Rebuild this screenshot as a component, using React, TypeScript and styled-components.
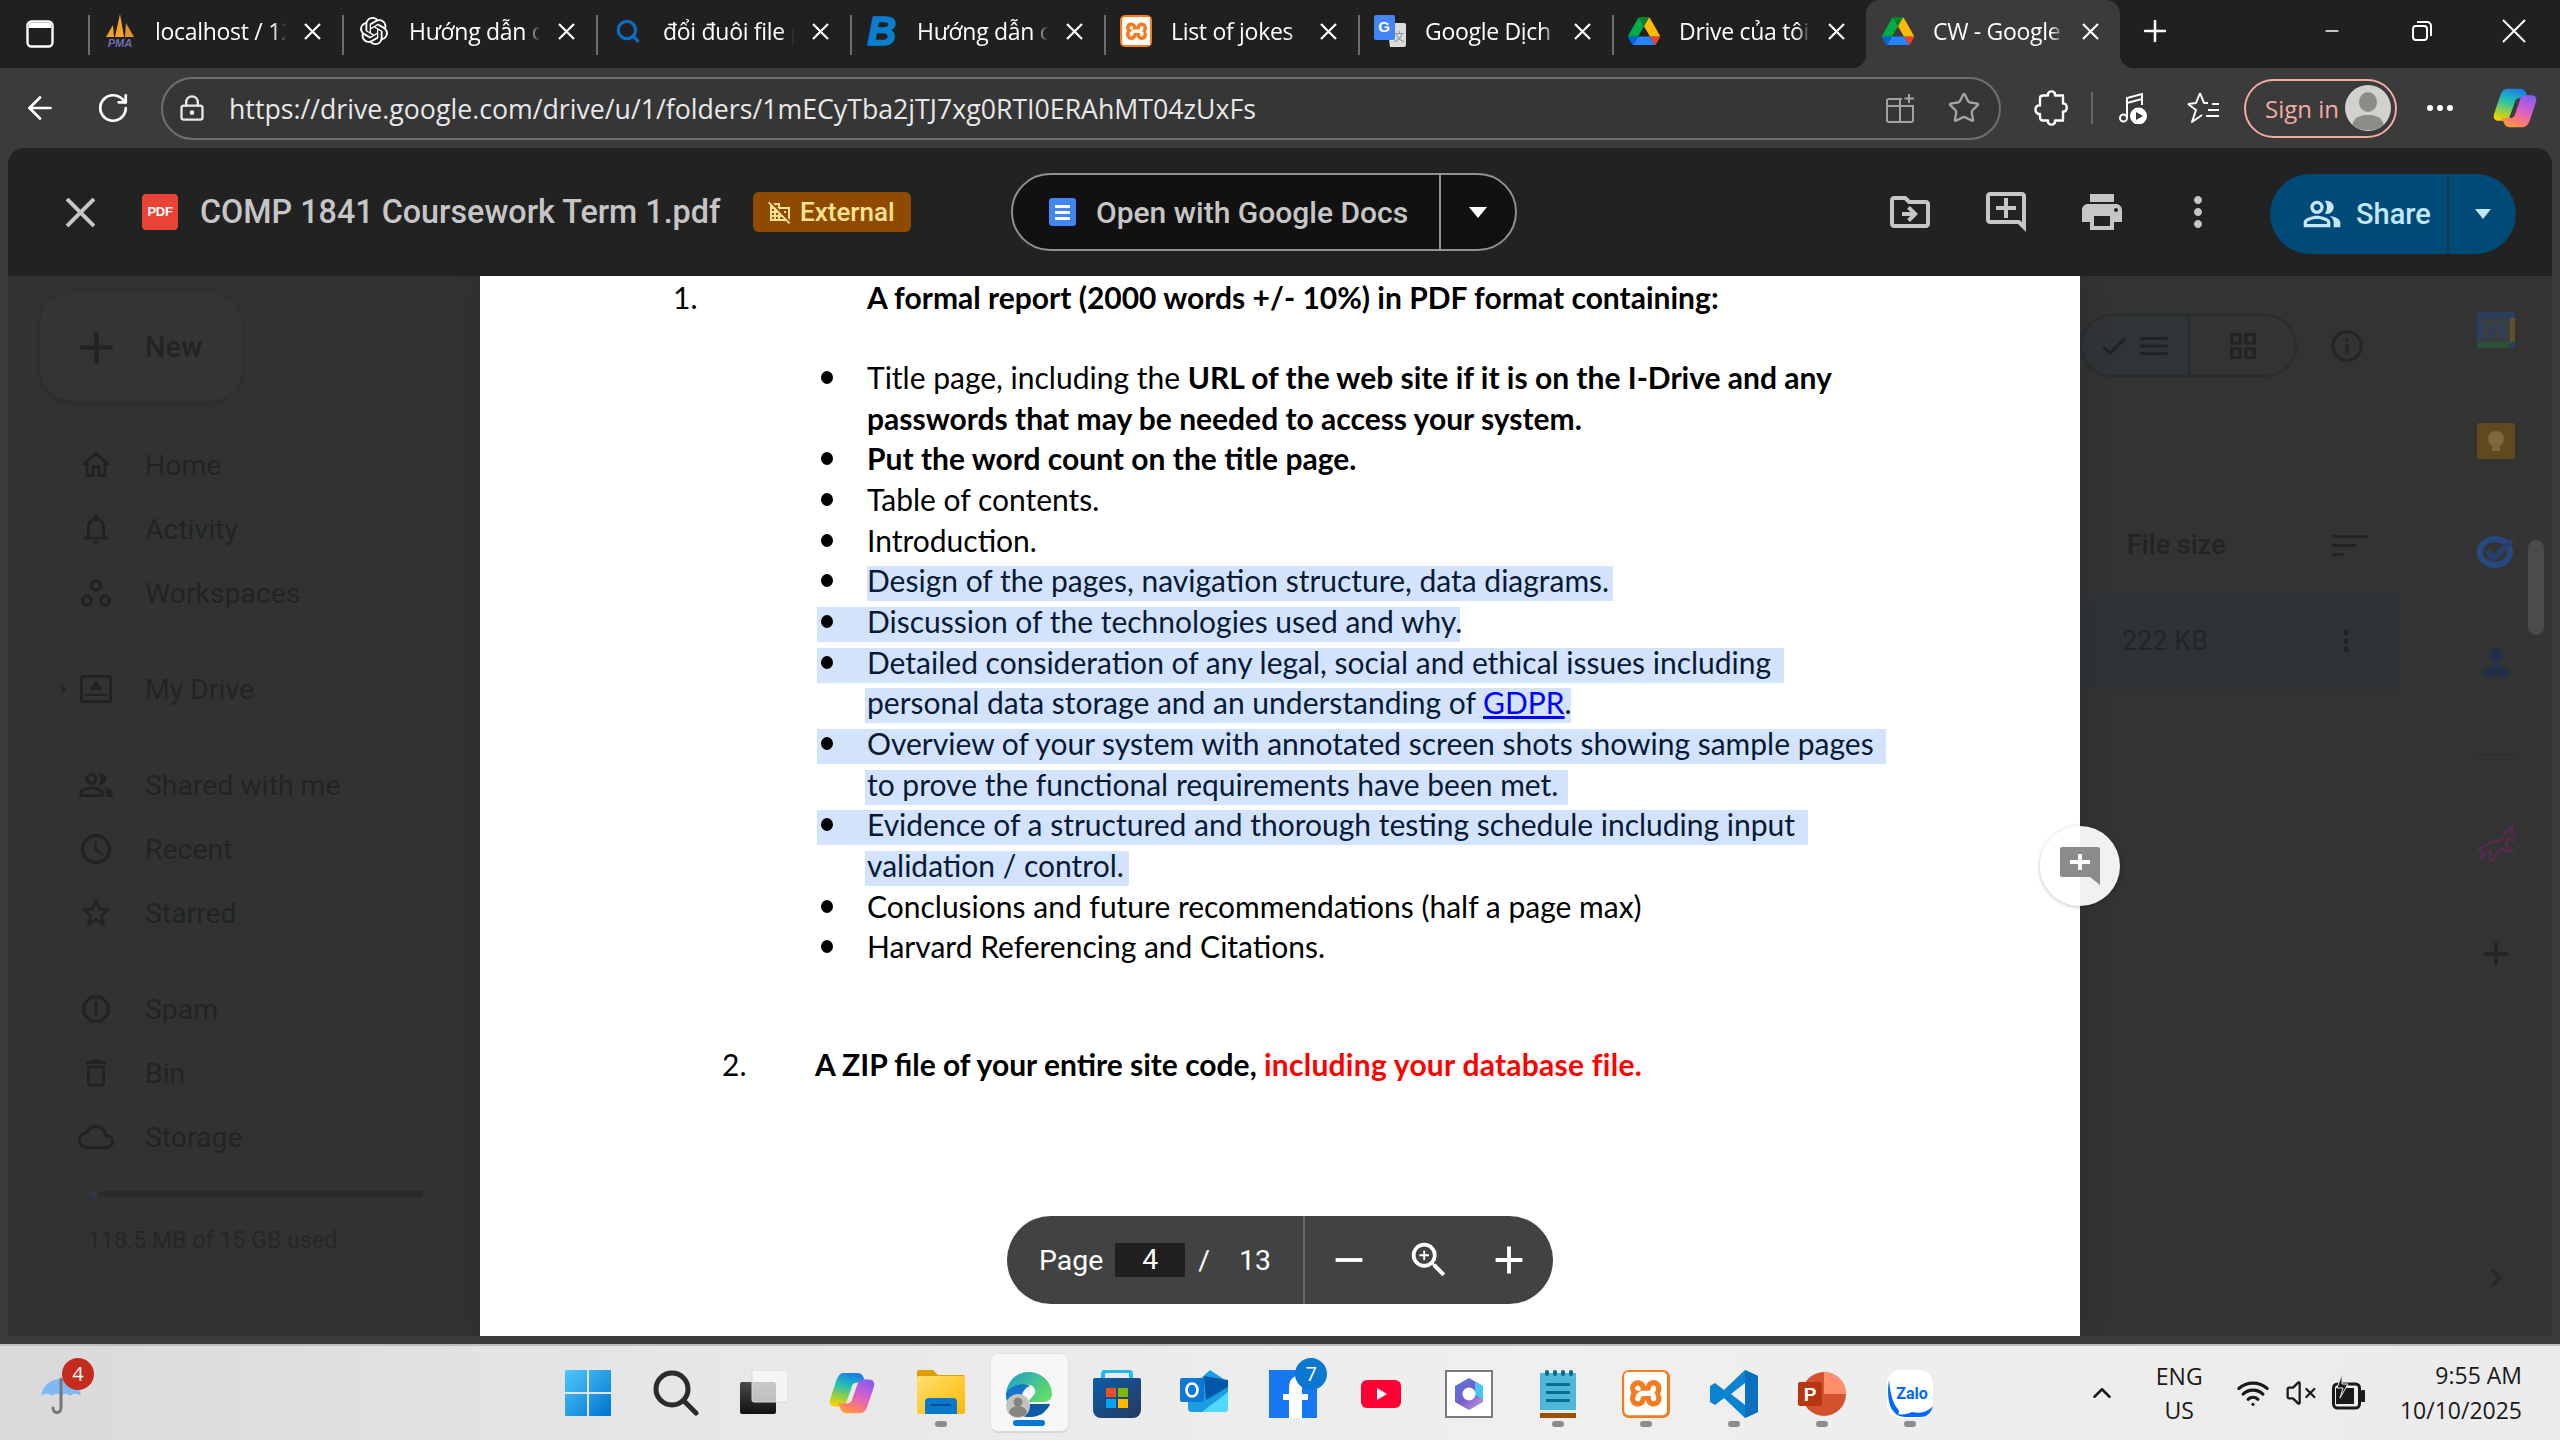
import React from "react";
import styled, { createGlobalStyle } from "styled-components";
import {
  MdOutlineDriveFileMove, MdOutlineAddComment, MdPrint, MdMoreVert, MdZoomIn, MdCheck, MdMenu,
  MdOutlineGridView, MdInfoOutline, MdOutlineHome, MdOutlineNotifications, MdOutlineWorkspaces, MdOutlinePeopleAlt,
  MdOutlineAccessTime, MdStarOutline, MdOutlineReport, MdOutlineDelete, MdOutlineCloud, MdAdd, MdRemove,
  MdDomainDisabled, MdOutlineChevronRight,
} from "react-icons/md";
import { SiOpenai, SiXampp } from "react-icons/si";
import { ArrowLeft, RotateCw, Search, Star, Plus, Minus, LockKeyhole, ChevronUp, VolumeX, Wifi } from "lucide-react";

const Global = createGlobalStyle`
  html, body { margin: 0; padding: 0; background: #3b3b3b; }
  * { box-sizing: border-box; }
`;

const Screen = styled.div`
  width: 2560px; height: 1440px; overflow: hidden; display: flex; flex-direction: column;
  background: #3b3b3b; font-family: "Open Sans", sans-serif;
`;

/* ---------- tab strip ---------- */
const TabStrip = styled.div`
  height: 68px; background: #202020; display: flex; align-items: stretch; color: #fff; flex: none;
`;
const PaneToggle = styled.div`
  width: 88px; display: flex; align-items: center; justify-content: flex-start; padding-left: 26px;
`;
const Tab = styled.div<{ $active?: boolean; $sep?: boolean }>`
  width: 254px; position: relative; display: flex; align-items: center; padding: 0 21px 6px 14px;
  background: ${(p) => (p.$active ? "#3b3b3b" : "transparent")};
  border-radius: ${(p) => (p.$active ? "14px 14px 0 0" : "0")};
  &::before {
    content: ""; position: absolute; left: 0; top: 15px; height: 40px; width: 2px;
    background: ${(p) => (p.$sep ? "#6c6c6c" : "transparent")};
  }
  ${(p) => p.$active && `
    &::after {
      content: ""; position: absolute; left: -14px; right: -14px; bottom: 0; height: 14px; pointer-events: none;
      background:
        radial-gradient(circle at 0 0, transparent 14px, #3b3b3b 14.5px) left bottom / 14px 14px no-repeat,
        radial-gradient(circle at 100% 0, transparent 14px, #3b3b3b 14.5px) right bottom / 14px 14px no-repeat;
    }`}
`;
const Favicon = styled.div`
  width: 36px; height: 40px; flex: none; display: flex; align-items: center; justify-content: center;
`;
const TabTitle = styled.div`
  margin-left: 17px; width: 131px; flex: none; overflow: hidden; white-space: nowrap;
  font-size: 23px; line-height: 34px; letter-spacing: -0.3px; color: #fff;
  -webkit-mask-image: linear-gradient(90deg, #000 90%, transparent 100%);
  mask-image: linear-gradient(90deg, #000 90%, transparent 100%);
`;
const TabClose = styled.div`
  margin-left: auto; width: 17px; display: flex; justify-content: center; color: #fff; flex: none;
`;
const NewTab = styled.div`
  width: 70px; display: flex; align-items: center; justify-content: center; padding: 0 0 6px 0;
`;
const WindowControls = styled.div`
  margin-left: auto; display: flex; align-items: center; padding-right: 34px; gap: 70px; padding-bottom: 6px;
`;
const BItalic = styled.span`
  font-family: "Liberation Sans", sans-serif; font-weight: 700; font-style: italic; font-size: 40px; line-height: 40px; color: #0a7fd0;
  -webkit-text-stroke: 1.6px #0a7fd0;
`;
const XamppBox = styled.div<{ $size: number }>`
  width: ${(p) => p.$size}px; height: ${(p) => p.$size}px; background: #f47b20; border-radius: ${(p) => Math.round(p.$size / 7)}px;
  display: flex; align-items: center; justify-content: center; flex: none;
`;

/* ---------- toolbar ---------- */
const Toolbar = styled.div`
  height: 80px; flex: none; display: flex; align-items: center; color: #fff;
`;
const NavIcons = styled.div`
  width: 161px; display: flex; align-items: center; padding-left: 22px; gap: 38px; flex: none;
`;
const AddressField = styled.div`
  width: 1840px; height: 63px; flex: none; display: flex; align-items: center; padding: 0 18px 0 15px;
  border: 2px solid #6f6f6f; border-radius: 32px; background: #363636;
`;
const Url = styled.div`
  margin-left: 23px; font-size: 26.7px; color: #e8e8e8; white-space: nowrap; width: 1100px;
`;
const FieldIcons = styled.div`
  margin-left: auto; display: flex; align-items: center; gap: 31px; color: #a3a3a3;
`;
const ToolIcons = styled.div`
  display: flex; align-items: center; flex: 1; padding-left: 33px;
`;
const Sep = styled.div`
  width: 2px; height: 32px; background: #666; margin: 0 26px 0 23px;
`;
const FavSlot = styled.div`
  margin-left: 39px; display: flex;
`;
const SignIn = styled.div`
  width: 153px; height: 59px; margin-left: 24px; border: 2px solid #f2aca4; border-radius: 30px; display: flex;
  align-items: center; padding-left: 19px; color: #f2aca4; font-size: 24px; justify-content: space-between; padding-right: 4px;
`;
const Avatar = styled.div`
  width: 46px; height: 46px; border-radius: 50%; background: #d2d1cd; overflow: hidden; display: flex; align-items: center; justify-content: center;
`;
const MoreDots = styled.div`
  margin-left: 30px; display: flex; gap: 4px;
  span { width: 6px; height: 6px; border-radius: 50%; background: #fff; display: block; }
`;
const CopilotSlot = styled.div`
  margin-left: 40px; display: flex;
`;

/* ---------- viewer window ---------- */
const Viewer = styled.div`
  margin: 0 8px; height: 1188px; flex: none; border-radius: 16px 16px 0 0; overflow: hidden; display: flex; flex-direction: column;
`;
const Header = styled.div`
  height: 128px; flex: none; background: #222222; display: flex; align-items: center; padding-left: 56px;
  font-family: Roboto, sans-serif; color: #c4c7c5;
`;
const HeaderClose = styled.div`
  width: 32px; display: flex; justify-content: center; color: #c4c7c5; flex: none;
`;
const PdfIcon = styled.div`
  margin-left: 46px; width: 36px; height: 36px; border-radius: 4px; background: #ea4335; color: #fff; flex: none;
  font: 900 13px/36px "Liberation Sans", sans-serif; text-align: center; letter-spacing: -0.3px;
`;
const DocTitle = styled.div`
  margin-left: 22px; width: 553px; flex: none; white-space: nowrap; font-size: 32.3px; font-weight: 500; color: #c6c6c6;
`;
const ExternalBadge = styled.div`
  width: 158px; height: 40px; flex: none; background: #8f4a00; border-radius: 6px; display: flex; align-items: center; gap: 8px;
  padding-left: 15px; color: #fde293; font-size: 26px; font-weight: 500; margin-right: 100px;
`;
const OpenWith = styled.div`
  width: 506px; height: 78px; flex: none; border: 2px solid #8e918f; border-radius: 39px; background: #111111;
  display: flex; align-items: center; margin-right: 369px;
`;
const OpenMain = styled.div`
  width: 428px; height: 100%; flex: none; display: flex; align-items: center; padding-left: 36px; gap: 20px;
  font-size: 30px; font-weight: 500; color: #c6c6c6; border-right: 2px solid #8e918f; white-space: nowrap;
`;
const DocsGlyph = styled.div`
  width: 27px; height: 28px; border-radius: 3px; background: #4285f4; display: flex; flex-direction: column; align-items: center;
  justify-content: center; gap: 3px; flex: none;
  span { width: 15px; height: 3px; background: #fff; display: block; }
`;
const OpenCaret = styled.div`
  flex: 1; display: flex; justify-content: center;
`;
const Triangle = styled.div<{ $c: string; $s: number }>`
  width: 0; height: 0; border-left: ${(p) => p.$s}px solid transparent; border-right: ${(p) => p.$s}px solid transparent;
  border-top: ${(p) => p.$s + 2}px solid ${(p) => p.$c};
`;
const HeaderIcons = styled.div`
  display: flex; gap: 48px; margin-right: 48px; color: #c4c7c5;
`;
const HeaderIcon = styled.div`
  width: 48px; height: 48px; display: flex; align-items: center; justify-content: center;
`;
const ShareBtn = styled.div`
  width: 246px; height: 80px; margin-top: 4px; border-radius: 40px; background: #004a77; color: #c2e7ff; display: flex; align-items: center; flex: none;
`;
const ShareMain = styled.div`
  width: 179px; height: 100%; display: flex; align-items: center; padding-left: 32px; gap: 14px; font-size: 29px; font-weight: 500;
  border-right: 2px solid #1c3548;
`;
const ShareCaret = styled.div`
  flex: 1; display: flex; justify-content: center;
`;

const Body = styled.div`
  height: 1060px; display: grid; grid-template-columns: 472px 1600px 472px; grid-template-rows: 1060px; position: relative;
  font-family: Roboto, sans-serif;
`;

/* ---------- dimmed drive sidebar ---------- */
const Sidebar = styled.div`
  background: #313333; padding-top: 17px; color: #242626; display: flex; flex-direction: column;
`;
const NewButton = styled.div`
  width: 202px; height: 108px; margin-left: 32px; border-radius: 32px; background: #333535; box-shadow: 0 2px 6px rgba(0,0,0,.14);
  display: flex; align-items: center; padding-left: 29px; gap: 21px; font-size: 29px; font-weight: 500; color: #222424; margin-bottom: 32px; flex: none;
`;
const NavGroup = styled.div<{ $last?: boolean }>`
  margin-bottom: ${(p) => (p.$last ? 0 : 32)}px;
`;
const NavRow = styled.div`
  height: 64px; display: flex; align-items: center; padding-left: 48px; font-size: 28.4px; color: #222424;
`;
const CaretCell = styled.div`
  width: 22px; height: 36px; display: flex; align-items: center; flex: none;
`;
const SmallCaret = styled.div`
  width: 0; height: 0; border-top: 5px solid transparent; border-bottom: 5px solid transparent; border-left: 6px solid #242626; margin-left: 5px;
`;
const NavIcon = styled.div`
  width: 36px; display: flex; justify-content: center; margin-right: 31px; color: #212323; flex: none;
`;
const StorageBar = styled.div`
  margin: 22px 0 0 84px; width: 331px; height: 6px; background: #292b2b; display: flex; flex: none;
  &::before { content: ""; width: 3px; height: 100%; background: #2a3a50; }
  &::after { content: ""; width: 4px; height: 100%; background: #313333; }
`;
const StorageText = styled.div`
  margin: 26px 0 0 80px; font-size: 23.2px; line-height: 34px; color: #252727; white-space: nowrap;
`;

/* ---------- pdf page ---------- */
const Page = styled.div`
  background: #fff; position: relative; padding-top: 4px; color: #000; box-shadow: 0 0 26px rgba(0,0,0,.12); z-index: 1;
  font-family: Lato, sans-serif; font-size: 30px;
`;
const HeadRow = styled.div<{ $indent: number; $num: number; $gap?: number }>`
  display: flex; align-items: center; height: 40.7px; padding-left: ${(p) => p.$indent}px; margin-top: ${(p) => p.$gap ?? 0}px; white-space: nowrap;
  & > span:first-child { width: ${(p) => p.$num}px; flex: none; }
`;
const ItemList = styled.div`
  margin-top: 39.3px; padding-left: 337px;
`;
const ItemRow = styled.div`
  display: flex; align-items: center; height: 40.7px; white-space: nowrap;
`;
const Band = styled.div<{ $w?: number; $left?: number; $pad?: number; $on?: boolean }>`
  display: flex; align-items: center; height: 35px; flex: none;
  width: ${(p) => (p.$w ? `${p.$w}px` : "auto")};
  margin-left: ${(p) => p.$left ?? 0}px; padding-left: ${(p) => p.$pad ?? 0}px;
  background: ${(p) => (p.$on ? "#d3e3fd" : "transparent")};
  color: ${(p) => (p.$on ? "#061a35" : "#000")};
`;
const LineText = styled.span`
  display: block; padding-bottom: 6px; line-height: 35px;
`;
const BulletCell = styled.div`
  width: 50px; flex: none; display: flex; padding: 0 0 6px 4px;
  &::before { content: ""; width: 12px; height: 13px; border-radius: 50%; background: #000; display: block; }
`;
const Strong = styled.b`font-weight: 700;`;
const RedStrong = styled.b`font-weight: 700; color: #ff0000; letter-spacing: 0.25px;`;
const DocLink = styled.span`color: #0000ff; text-decoration: underline;`;
const CommentFab = styled.div`
  position: absolute; left: 2032px; top: 550px; width: 80px; height: 80px; border-radius: 50%; z-index: 2; display: flex; align-items: center; justify-content: center;
  background: linear-gradient(90deg, #fff 50%, #f1f1f1 50%); box-shadow: 0 1px 4px rgba(0,0,0,.25);
`;
const PageBar = styled.div`
  position: absolute; left: 527px; bottom: 32px; width: 546px; height: 88px; border-radius: 44px; background: #424242; color: #fff;
  display: flex; align-items: center; font-family: Roboto, sans-serif; font-size: 28.4px;
`;
const PagePart = styled.div`
  width: 298px; height: 100%; display: flex; align-items: center; padding-left: 32px; border-right: 2px solid #6b6b6b; flex: none;
`;
const PageInput = styled.div`
  width: 70px; height: 34px; background: #202020; margin: 0 13px 0 12px; text-align: center; line-height: 34px;
`;
const PageSlash = styled.span`margin-right: 29px;`;
const ZoomPart = styled.div`
  flex: 1; display: flex; align-items: center; justify-content: space-between; padding: 0 21px 0 21px;
`;

/* ---------- dimmed drive right panel ---------- */
const RightPanel = styled.div`
  background: #333333; display: grid; grid-template-columns: 320px 1fr; position: relative; color: #252525;
`;
const FileArea = styled.div`
  padding-top: 38px; display: flex; flex-direction: column;
`;
const ViewBar = styled.div`
  display: flex; align-items: center; gap: 31px;
`;
const ViewToggle = styled.div`
  width: 217px; height: 63px; border: 2px solid #2b2d2d; border-radius: 32px; display: flex; overflow: hidden; flex: none;
`;
const ViewHalf = styled.div<{ $on?: boolean }>`
  width: ${(p) => (p.$on ? "108px" : "105px")}; display: flex; align-items: center; justify-content: center; gap: 6px; color: #202224;
  background: ${(p) => (p.$on ? "#2f3437" : "transparent")}; border-right: ${(p) => (p.$on ? "2px solid #2b2d2d" : "0")};
`;
const SizeHeader = styled.div`
  margin-top: 144px; height: 48px; display: flex; align-items: center; padding-left: 47px; font-size: 27px; font-weight: 500; color: #232323;
`;
const SortLines = styled.div`
  margin-left: 107px; display: flex; flex-direction: column; gap: 6px;
  span { height: 3px; background: #242424; display: block; }
  span:nth-child(1) { width: 36px; } span:nth-child(2) { width: 24px; } span:nth-child(3) { width: 12px; }
`;
const SelectedRow = styled.div`
  margin-top: 24px; height: 96px; background: #2e3336; display: flex; align-items: center; padding-left: 42px; font-size: 27px; color: #222528;
`;
const RowDots = styled.div`
  margin-left: auto; margin-right: 36px; width: 36px; display: flex; justify-content: center; color: #202224;
`;
const Rail = styled.div`
  margin-left: 40px; display: flex; flex-direction: column; align-items: center; width: 112px; padding-top: 34px;
`;
const RailIcon = styled.div<{ $after?: number }>`
  width: 40px; height: 40px; display: flex; align-items: center; justify-content: center; margin-bottom: ${(p) => p.$after ?? 71}px; flex: none;
`;
const RailRule = styled.div`
  width: 38px; height: 2px; background: #2f2f2f; margin-bottom: 67px; flex: none;
`;
const Scrollbar = styled.div`
  position: absolute; right: 8px; top: 264px; width: 16px; height: 95px; border-radius: 8px; background: #4b4b4b;
`;

/* ---------- taskbar ---------- */
const Gutter = styled.div`height: 8px; flex: none;`;
const Taskbar = styled.div`
  height: 96px; flex: none; border-top: 2px solid #bdbdbd; background: linear-gradient(90deg, #d9d9d9 0%, #e8e8e8 30%, #efefef 60%, #ebebeb 100%);
  display: flex; align-items: stretch; color: #1a1a1a;
`;
const WeatherZone = styled.div`
  width: 544px; flex: none; position: relative; padding: 30px 0 0 40px;
`;
const CountBadge = styled.div<{ $bg: string; $left: number; $top: number }>`
  position: absolute; z-index: 2; left: ${(p) => p.$left}px; top: ${(p) => p.$top}px; width: 32px; height: 32px; border-radius: 50%; background: ${(p) => p.$bg};
  color: #fff; font: 20px/32px "Open Sans", sans-serif; text-align: center;
`;
const Slot = styled.div<{ $active?: boolean }>`
  width: 88.15px; flex: none; position: relative; display: flex; align-items: flex-start; justify-content: center; padding-top: 24px;
  ${(p) => p.$active && `
    &::before {
      content: ""; position: absolute; left: 5px; top: 7px; width: 77px; height: 77px; background: #f7f7f7; border: 1px solid #e2e2e2; border-bottom: 2px solid #d8d8d8; border-radius: 8px;
    }`}
  & > svg { position: relative; }
`;
const RunDot = styled.div<{ $active?: boolean }>`
  position: absolute; left: 50%; bottom: ${(p) => (p.$active ? "14px" : "13px")}; transform: translateX(-50%);
  width: ${(p) => (p.$active ? "32px" : "12px")}; height: 6px; border-radius: 3px; background: ${(p) => (p.$active ? "#0078d4" : "#8b8b8b")};
`;
const Tray = styled.div`
  margin-left: 133px; display: flex; align-items: center; flex: 1;
`;
const Lang = styled.div`
  width: 70px; margin-left: 27px; text-align: center; font-size: 23px; line-height: 34px; flex: none;
`;
const TrayIcons = styled.div`
  display: flex; align-items: center; gap: 15px; margin-left: 22px; flex: none;
`;
const Clock = styled.div`
  margin-left: auto; margin-right: 38px; text-align: right; font-size: 23px; line-height: 35px;
`;
const YoutubeSvg = styled.svg`
  margin-top: 10px;
`;

/* ---------- drawings ---------- */
const TightX = ({ size, weight, color = "currentColor" }: { size: number; weight: number; color?: string }) => (
  <svg width={size} height={size} viewBox={`0 0 ${size} ${size}`} fill="none" stroke={color} strokeWidth={weight}>
    <path d={`M1 1L${size - 1} ${size - 1}M${size - 1} 1L1 ${size - 1}`} />
  </svg>
);

const DriveLogo = ({ size = 32 }: { size?: number }) => (
  <svg width={size} height={size * 0.9} viewBox="0 0 87.3 78">
    <path d="m6.6 66.85 3.85 6.65c.8 1.4 1.95 2.5 3.3 3.3l13.75-23.8h-27.5c0 1.55.4 3.1 1.2 4.5z" fill="#0066da" />
    <path d="m43.65 25-13.75-23.8c-1.35.8-2.5 1.9-3.3 3.3l-25.4 44a9.06 9.06 0 0 0 -1.2 4.5h27.5z" fill="#00ac47" />
    <path d="m73.55 76.8c1.35-.8 2.5-1.9 3.3-3.3l1.6-2.75 7.65-13.25c.8-1.4 1.2-2.95 1.2-4.5h-27.502l5.852 11.5z" fill="#ea4335" />
    <path d="m43.65 25 13.75-23.8c-1.35-.8-2.9-1.2-4.5-1.2h-18.5c-1.6 0-3.15.45-4.5 1.2z" fill="#00832d" />
    <path d="m59.8 53h-32.3l-13.75 23.8c1.35.8 2.9 1.2 4.5 1.2h50.8c1.6 0 3.15-.45 4.5-1.2z" fill="#2684fc" />
    <path d="m73.4 26.5-12.7-22c-.8-1.4-1.95-2.5-3.3-3.3l-13.75 23.8 16.15 28h27.45c0-1.55-.4-3.1-1.2-4.5z" fill="#ffba00" />
  </svg>
);

const PmaLogo = () => (
  <svg width="36" height="36" viewBox="0 0 36 36">
    <path d="M4 24 L11 12 L12 24Z" fill="#f0a030" />
    <path d="M13 24 L18 1 L22 24Z" fill="#f6a52a" />
    <path d="M23 24 L24 10 L32 24Z" fill="#e8922a" />
    <text x="18" y="34" textAnchor="middle" fontSize="11" fontStyle="italic" fontWeight="700" fontFamily="Liberation Sans" fill="#6a6fa8">PMA</text>
  </svg>
);

const TranslateLogo = () => (
  <svg width="32" height="32" viewBox="0 0 32 32">
    <path d="M13 8h17a2 2 0 0 1 2 2v20a2 2 0 0 1-2 2H16z" fill="#dcdcdc" />
    <rect x="0" y="0" width="21" height="25" rx="2" fill="#4285f4" />
    <text x="10" y="17" textAnchor="middle" fontSize="15" fontWeight="700" fontFamily="Liberation Sans" fill="#fff">G</text>
    <text x="25" y="26" textAnchor="middle" fontSize="11" fontFamily="Noto Sans CJK SC" fill="#7d8a9a">文</text>
  </svg>
);

const XamppTile = ({ size }: { size: number }) => (
  <XamppBox $size={size}>
    <SiXampp size={size * 0.9} color="#fff" />
  </XamppBox>
);

const PuzzleGlyph = () => (
  <svg width="34" height="38" viewBox="0 0 34 38" fill="none" stroke="#fff" strokeWidth="2.4" strokeLinejoin="round">
    <path d="M12 6.500H14C13 1 22 1 21 6.500H29V14.500C34 13.500 34 23.500 29 22.500V31.500H21C22 37 13 37 14 31.500H9C7 31.500 6 30 6 28V25C0 26 0 15 6 16.500V9.500C6 7.500 7 6.500 9 6.500Z" />
  </svg>
);

const CopilotGlyph = ({ size, id }: { size: number; id: string }) => (
  <svg width={size} height={size} viewBox="0 0 48 48">
    <defs>
      <linearGradient id={`${id}a`} x1="0.6" y1="0" x2="0.3" y2="1">
        <stop offset="0" stopColor="#1b7fe8" /><stop offset="0.4" stopColor="#24c0b0" /><stop offset="0.75" stopColor="#9ad040" /><stop offset="1" stopColor="#f7d000" />
      </linearGradient>
      <linearGradient id={`${id}b`} x1="0.7" y1="0" x2="0.3" y2="1">
        <stop offset="0" stopColor="#8a5cf0" /><stop offset="0.45" stopColor="#d860c8" /><stop offset="0.8" stopColor="#ff7a70" /><stop offset="1" stopColor="#ff9a3c" />
      </linearGradient>
    </defs>
    <path d="M16 3H30C34 3 36 6 38 13H30C25 13 24 16 23 20L18 34C17 37 15 38 12 38H6C2 38 0 35 1 31L8 10C10 5 12 3 16 3Z" fill={`url(#${id}a)`} />
    <path d="M32 45H18C14 45 12 42 10 35H18C23 35 24 32 25 28L30 14C31 11 33 10 36 10H42C46 10 48 13 47 17L40 38C38 43 36 45 32 45Z" fill={`url(#${id}b)`} />
  </svg>
);

const WinLogo = () => (
  <svg width="46" height="46" viewBox="0 0 46 46">
    <defs>
      <linearGradient id="wl" x1="0" y1="0" x2="1" y2="1"><stop offset="0" stopColor="#50c8fb" /><stop offset="1" stopColor="#0072d0" /></linearGradient>
    </defs>
    <path d="M1 0H22V22H0V1a1 1 0 0 1 1-1ZM24 0H45a1 1 0 0 1 1 1V22H24ZM0 24H22V46H1a1 1 0 0 1-1-1ZM24 24H46V45a1 1 0 0 1-1 1H24Z" fill="url(#wl)" />
  </svg>
);
const SearchGlyph = () => (
  <svg width="46" height="46" viewBox="0 0 46 46" fill="none" stroke="#2b2b2b">
    <circle cx="19" cy="19" r="16" strokeWidth="5" />
    <path d="M31 31L43 43" strokeWidth="5" strokeLinecap="round" />
  </svg>
);
const TaskViewGlyph = () => (
  <svg width="48" height="46" viewBox="0 0 48 46">
    <defs><linearGradient id="tv" x1="0" y1="0" x2="0" y2="1"><stop offset="0" stopColor="#4a4a4a" /><stop offset="1" stopColor="#111" /></linearGradient></defs>
    <rect x="0" y="12" width="36" height="32" rx="2" fill="url(#tv)" />
    <rect x="12" y="0" width="36" height="32" rx="2" fill="#fafafa" fillOpacity=".72" stroke="#d8d8d8" />
  </svg>
);
const FolderGlyph = () => (
  <svg width="48" height="44" viewBox="0 0 48 44">
    <defs><linearGradient id="fo" x1="0" y1="0" x2="1" y2="1"><stop offset="0" stopColor="#ffe070" /><stop offset="1" stopColor="#fbb800" /></linearGradient></defs>
    <path d="M0 2a2 2 0 0 1 2-2H16l5 5H46a2 2 0 0 1 2 2v6H0Z" fill="#dca000" />
    <rect x="0" y="6" width="48" height="38" rx="2" fill="url(#fo)" />
    <path d="M8 32a4 4 0 0 1 4-4H36a4 4 0 0 1 4 4V44H8Z" fill="#0a78cc" />
    <rect x="14" y="34" width="20" height="2" fill="#064f94" />
  </svg>
);
const EdgeGlyph = () => (
  <svg width="48" height="48" viewBox="0 0 48 48">
    <defs>
      <linearGradient id="ed" x1="0" y1="0" x2="1" y2="0.6"><stop offset="0" stopColor="#1a9ad6" /><stop offset="1" stopColor="#5fdc6a" /></linearGradient>
    </defs>
    <path d="M1 23C3 9 14 1 25 2C38 3 47 13 47 24C47 29 43 32 38 32H24C25 28 29 26 30 23C31 18 27 14 21 15C12 16 6 19 1 23Z" fill="url(#ed)" />
    <path d="M1 23C6 15 18 12 25 16C19 18 15 25 17 33C19 41 30 46 40 42C35 46 29 47 24 47C10 46 0 36 1 23Z" fill="#1277c9" />
    <path d="M24 34H45C43 41 33 47 24 47C19 47 16 45 14 42C18 42 22 39 24 34Z" fill="#0c59a4" />
    <circle cx="13" cy="36" r="12" fill="#c4c3c0" />
    <circle cx="13" cy="32" r="4.5" fill="#858481" />
    <path d="M4 43a9 7 0 0 1 18 0a12 12 0 0 1-18 0Z" fill="#858481" />
  </svg>
);
const StoreGlyph = () => (
  <svg width="48" height="50" viewBox="0 0 48 50">
    <defs><linearGradient id="st" x1="0" y1="0" x2="1" y2="1"><stop offset="0" stopColor="#0b5ea8" /><stop offset="1" stopColor="#27385f" /></linearGradient></defs>
    <path d="M10 10V4a3 3 0 0 1 3-3H35a3 3 0 0 1 3 3V10" fill="none" stroke="#22b8f0" strokeWidth="4" />
    <path d="M2 8H46a2 2 0 0 1 2 2V40a8 8 0 0 1-8 8H8a8 8 0 0 1-8-8V10a2 2 0 0 1 2-2Z" fill="url(#st)" />
    <rect x="13" y="18" width="10" height="9" fill="#f25022" /><rect x="25" y="18" width="10" height="9" fill="#7fba00" />
    <rect x="13" y="29" width="10" height="9" fill="#00a4ef" /><rect x="25" y="29" width="10" height="9" fill="#ffb900" />
  </svg>
);
const OutlookGlyph = () => (
  <svg width="50" height="44" viewBox="0 0 50 44">
    <path d="M8 20L30 0L48 12V38a4 4 0 0 1-4 4H12a4 4 0 0 1-4-4Z" fill="#1b9de2" />
    <path d="M22 42L48 22V38a4 4 0 0 1-4 4Z" fill="#50d9ff" />
    <path d="M24 6L48 10V17L26 30Z" fill="#0358a7" />
    <rect x="0" y="8" width="24" height="24" rx="2" fill="#0f78d4" />
    <ellipse cx="12" cy="20" rx="5.5" ry="6.5" fill="none" stroke="#fff" strokeWidth="2.6" />
  </svg>
);
const FacebookGlyph = () => (
  <svg width="48" height="48" viewBox="0 0 48 48">
    <rect width="48" height="48" fill="#1877f2" />
    <path d="M33 48V30H39V24H33V18C33 14 35 12 38 12V5H33C24 5 20 10 20 18V24H14V30H20V48Z" fill="#fff" />
  </svg>
);
const YoutubeGlyph = () => (
  <YoutubeSvg width="40" height="28" viewBox="0 0 40 28">
    <rect width="40" height="28" rx="6" fill="#ff0033" />
    <path d="M16 8L26 14L16 20Z" fill="#fff" />
  </YoutubeSvg>
);
const M365Glyph = () => (
  <svg width="48" height="48" viewBox="0 0 48 48">
    <defs>
      <linearGradient id="m3" x1="0" y1="0" x2="1" y2="1"><stop offset="0" stopColor="#4a7fe0" /><stop offset="0.5" stopColor="#7a5cc8" /><stop offset="1" stopColor="#c49ae8" /></linearGradient>
    </defs>
    <rect x="1" y="1" width="46" height="46" fill="#fff" stroke="#7a7a7a" strokeWidth="2" />
    <path d="M24 8L38 16V32L24 40L10 32V16Z" fill="url(#m3)" />
    <path d="M30 11.5L38 16V30L30 24Z" fill="#45c8f0" />
    <circle cx="24" cy="24" r="6.5" fill="#fff" />
  </svg>
);
const NotepadGlyph = () => (
  <svg width="36" height="48" viewBox="0 0 36 48">
    <rect x="0" y="3" width="36" height="38" fill="#4fb7dc" />
    <rect x="0" y="40" width="36" height="3" fill="#dfeaf0" />
    <rect x="0" y="43" width="36" height="5" fill="#a04e00" />
    {[5, 13, 21, 29].map((x) => <rect key={x} x={x} y="0" width="4" height="6" rx="2" fill="#086d93" />)}
    {[13, 21, 29].map((y) => <rect key={y} x="6" y={y} width="24" height="3" rx="1" fill="#086d93" />)}
  </svg>
);
const VsCodeGlyph = () => (
  <svg width="48" height="48" viewBox="0 0 48 48">
    <path d="M35 0L48 6V42L35 48L14 28L5 35L0 32V16L5 13L14 20ZM35 13L21 24L35 35Z" fill="#0a84d0" fillRule="evenodd" />
    <path d="M35 0L48 6V42L35 48Z" fill="#0a6fbd" />
  </svg>
);
const PptGlyph = () => (
  <svg width="48" height="48" viewBox="0 0 48 48">
    <circle cx="26" cy="24" r="22" fill="#d35230" />
    <path d="M26 2A22 22 0 0 1 48 24H26Z" fill="#ff8f6b" />
    <rect x="0" y="12" width="24" height="24" rx="2" fill="#b7350f" />
    <text x="12" y="31" textAnchor="middle" fontSize="19" fontWeight="700" fontFamily="Liberation Sans" fill="#fff">P</text>
  </svg>
);
const ZaloGlyph = () => (
  <svg width="48" height="48" viewBox="0 0 48 48">
    <rect x="1" y="0" width="46" height="48" rx="14" fill="#fff" />
    <path d="M3 10C1 22 2 36 8 42C12 47 18 47 24 47H34C40 47 45 44 47 36C42 42 34 44 26 42C22 44 16 45 12 44C14 42 13 40 11 38C6 32 4 20 3 10Z" fill="#0068ff" />
    <text x="26" y="29" textAnchor="middle" fontSize="16" fontWeight="700" fontFamily="Roboto" fill="#0068ff">Zalo</text>
  </svg>
);

const taskbarApps: { node: React.ReactNode; dot?: boolean; active?: boolean; badge?: string }[] = [
  { node: <WinLogo /> }, { node: <SearchGlyph /> }, { node: <TaskViewGlyph /> },
  { node: <CopilotGlyph size={46} id="tb" /> }, { node: <FolderGlyph />, dot: true },
  { node: <EdgeGlyph />, active: true }, { node: <StoreGlyph /> }, { node: <OutlookGlyph /> },
  { node: <FacebookGlyph />, badge: "7" }, { node: <YoutubeGlyph /> }, { node: <M365Glyph /> },
  { node: <NotepadGlyph />, dot: true }, { node: <XamppTile size={48} />, dot: true },
  { node: <VsCodeGlyph />, dot: true }, { node: <PptGlyph />, dot: true },
  { node: <ZaloGlyph />, dot: true },
];

const tabs: { title: string; icon: React.ReactNode }[] = [
  { title: "localhost / 127.0.0.1", icon: <PmaLogo /> },
  { title: "Hướng dẫn cách", icon: <SiOpenai size={28} color="#fff" /> },
  { title: "đổi đuôi file pdf", icon: <Search size={26} color="#0f6cbd" strokeWidth={3} /> },
  { title: "Hướng dẫn cách", icon: <BItalic>B</BItalic> },
  { title: "List of jokes", icon: <XamppTile size={32} /> },
  { title: "Google Dịch", icon: <TranslateLogo /> },
  { title: "Drive của tôi - Google", icon: <DriveLogo size={32} /> },
  { title: "CW - Google Drive", icon: <DriveLogo size={32} /> },
];

const MyDriveIcon = () => (
  <svg width="32" height="28" viewBox="0 0 32 28" fill="none">
    <rect x="1.5" y="1.5" width="29" height="25" rx="2" stroke="currentColor" strokeWidth="3" />
    <path d="M5 20H27" stroke="currentColor" strokeWidth="2" />
    <path d="M16 5L23 15H9Z" fill="currentColor" />
  </svg>
);

type Item = { kind: "plain" | "text" | "full" | "cont"; w?: number; body: React.ReactNode };
const items: Item[] = [
  { kind: "plain", body: <>Title page, including the <Strong>URL of the web site if it is on the I-Drive and any</Strong></> },
  { kind: "cont", body: <Strong>passwords that may be needed to access your system.</Strong> },
  { kind: "plain", body: <Strong>Put the word count on the title page.</Strong> },
  { kind: "plain", body: "Table of contents." },
  { kind: "plain", body: "Introduction." },
  { kind: "text", w: 746, body: "Design of the pages, navigation structure, data diagrams." },
  { kind: "full", w: 643, body: "Discussion of the technologies used and why." },
  { kind: "full", w: 967, body: "Detailed consideration of any legal, social and ethical issues including" },
  { kind: "cont", w: 706, body: <>personal data storage and an understanding of <DocLink>GDPR</DocLink>.</> },
  { kind: "full", w: 1069, body: "Overview of your system with annotated screen shots showing sample pages" },
  { kind: "cont", w: 703, body: "to prove the functional requirements have been met." },
  { kind: "full", w: 991, body: "Evidence of a structured and thorough testing schedule including input" },
  { kind: "cont", w: 264, body: "validation / control." },
  { kind: "plain", body: "Conclusions and future recommendations (half a page max)" },
  { kind: "plain", body: "Harvard Referencing and Citations." },
];

const renderItem = (it: Item, i: number) => {
  if (it.kind === "plain")
    return <ItemRow key={i}><BulletCell /><LineText>{it.body}</LineText></ItemRow>;
  if (it.kind === "text")
    return <ItemRow key={i}><BulletCell /><Band $on $w={it.w}><LineText>{it.body}</LineText></Band></ItemRow>;
  if (it.kind === "full")
    return <ItemRow key={i}><Band $on $w={it.w}><BulletCell /><LineText>{it.body}</LineText></Band></ItemRow>;
  return <ItemRow key={i}><Band $on={!!it.w} $w={it.w} $left={48} $pad={2}><LineText>{it.body}</LineText></Band></ItemRow>;
};

const navGroups: { label: string; icon: React.ReactNode; caret?: boolean }[][] = [
  [
    { label: "Home", icon: <MdOutlineHome size={38} /> },
    { label: "Activity", icon: <MdOutlineNotifications size={36} /> },
    { label: "Workspaces", icon: <MdOutlineWorkspaces size={36} /> },
  ],
  [{ label: "My Drive", icon: <MyDriveIcon />, caret: true }],
  [
    { label: "Shared with me", icon: <MdOutlinePeopleAlt size={36} /> },
    { label: "Recent", icon: <MdOutlineAccessTime size={36} /> },
    { label: "Starred", icon: <MdStarOutline size={36} /> },
  ],
  [
    { label: "Spam", icon: <MdOutlineReport size={36} /> },
    { label: "Bin", icon: <MdOutlineDelete size={36} /> },
    { label: "Storage", icon: <MdOutlineCloud size={38} /> },
  ],
];

export default function App() {
  return (
    <Screen>
      <Global />
      <TabStrip>
        <PaneToggle>
          <svg width="28" height="28" viewBox="0 0 28 28" fill="none">
            <rect x="1.5" y="1.5" width="25" height="25" rx="4" stroke="#fff" strokeWidth="2.4" />
            <path d="M3 3H25V8H3Z" fill="#fff" />
          </svg>
        </PaneToggle>
        {tabs.map((t, i) => (
          <Tab key={i} $active={i === 7} $sep={i < 7}>
            <Favicon>{t.icon}</Favicon>
            <TabTitle>{t.title}</TabTitle>
            <TabClose><TightX size={17} weight={2.2} /></TabClose>
          </Tab>
        ))}
        <NewTab><Plus size={34} strokeWidth={1.8} color="#fff" /></NewTab>
        <WindowControls>
          <Minus size={20} strokeWidth={2} color="#fff" />
          <svg width="20" height="20" viewBox="0 0 20 20" fill="none" stroke="#fff" strokeWidth="2">
            <rect x="1" y="5" width="14" height="14" rx="3" />
            <path d="M5 1H15a4 4 0 0 1 4 4V15" />
          </svg>
          <TightX size={24} weight={2} color="#fff" />
        </WindowControls>
      </TabStrip>

      <Toolbar>
        <NavIcons>
          <ArrowLeft size={36} strokeWidth={1.8} />
          <RotateCw size={34} strokeWidth={1.9} />
        </NavIcons>
        <AddressField>
          <LockKeyhole size={28} strokeWidth={2} color="#e8e8e8" />
          <Url>https://drive.google.com/drive/u/1/folders/1mECyTba2jTJ7xg0RTI0ERAhMT04zUxFs</Url>
          <FieldIcons>
            <svg width="30" height="30" viewBox="0 0 30 30" fill="none" stroke="currentColor" strokeWidth="2">
              <path d="M16 6H3a2 2 0 0 0-2 2V27a2 2 0 0 0 2 2H25a2 2 0 0 0 2-2V13H1M14 6V29" />
              <path d="M23 1V10M18.500 5.500H28" />
            </svg>
            <Star size={34} strokeWidth={1.7} />
          </FieldIcons>
        </AddressField>
        <ToolIcons>
          <PuzzleGlyph />
          <Sep />
          <svg width="28" height="32" viewBox="0 0 28 32" fill="none" stroke="#fff" strokeWidth="2">
            <circle cx="4.500" cy="26" r="3.500" />
            <path d="M8 26V6L23 2V13" /><path d="M8 11L23 7" />
            <circle cx="19.500" cy="24" r="7.500" fill="#fff" />
            <path d="M17 20L24 24L17 28Z" fill="#3b3b3b" stroke="none" />
          </svg>
          <FavSlot>
            <svg width="34" height="34" viewBox="0 0 34 34" fill="none" stroke="#fff" strokeWidth="2" strokeLinejoin="round">
              <path d="M14 2L18 12H22M2 13L10 19L6 31L16 24M26 13H33M22 19H33M20 25H33" />
              <path d="M14 2L10 12L2 13" />
            </svg>
          </FavSlot>
          <SignIn>
            Sign in
            <Avatar>
              <svg width="46" height="46" viewBox="0 0 46 46">
                <ellipse cx="23" cy="17" rx="9" ry="10" fill="#8d8c88" />
                <path d="M7 42C8 32 15 30 23 30S38 32 39 42C35 46 11 46 7 42Z" fill="#8d8c88" />
              </svg>
            </Avatar>
          </SignIn>
          <MoreDots><span /><span /><span /></MoreDots>
          <CopilotSlot><CopilotGlyph size={44} id="tool" /></CopilotSlot>
        </ToolIcons>
      </Toolbar>

      <Viewer>
        <Header>
          <HeaderClose><TightX size={29} weight={4} /></HeaderClose>
          <PdfIcon>PDF</PdfIcon>
          <DocTitle>COMP 1841 Coursework Term 1.pdf</DocTitle>
          <ExternalBadge><MdDomainDisabled size={24} color="#fde293" />External</ExternalBadge>
          <OpenWith>
            <OpenMain>
              <DocsGlyph><span /><span /><span /></DocsGlyph>
              Open with Google Docs
            </OpenMain>
            <OpenCaret><Triangle $c="#fff" $s={9} /></OpenCaret>
          </OpenWith>
          <HeaderIcons>
            <HeaderIcon><MdOutlineDriveFileMove size={48} /></HeaderIcon>
            <HeaderIcon><MdOutlineAddComment size={48} /></HeaderIcon>
            <HeaderIcon><MdPrint size={48} /></HeaderIcon>
            <HeaderIcon><MdMoreVert size={48} /></HeaderIcon>
          </HeaderIcons>
          <ShareBtn>
            <ShareMain><MdOutlinePeopleAlt size={40} />Share</ShareMain>
            <ShareCaret><Triangle $c="#c2e7ff" $s={8} /></ShareCaret>
          </ShareBtn>
        </Header>

        <Body>
          <Sidebar>
            <NewButton><MdAdd size={55} />New</NewButton>
            {navGroups.map((g, gi) => (
              <NavGroup key={gi} $last={gi === 3}>
                {g.map((n) => (
                  <NavRow key={n.label}>
                    <CaretCell>{n.caret && <SmallCaret />}</CaretCell>
                    <NavIcon>{n.icon}</NavIcon>
                    {n.label}
                  </NavRow>
                ))}
              </NavGroup>
            ))}
            <StorageBar />
            <StorageText>118.5 MB of 15 GB used</StorageText>
          </Sidebar>

          <Page>
            <HeadRow $indent={193} $num={194}>
              <LineText>1.</LineText>
              <LineText><Strong>A formal report (2000 words +/- 10%) in PDF format containing:</Strong></LineText>
            </HeadRow>
            <ItemList>{items.map(renderItem)}</ItemList>
            <HeadRow $indent={242} $num={93} $gap={77}>
              <LineText>2.</LineText>
              <LineText><Strong>A ZIP file of your entire site code, </Strong><RedStrong>including your database file.</RedStrong></LineText>
            </HeadRow>
            <PageBar>
              <PagePart>
                Page
                <PageInput>4</PageInput>
                <PageSlash>/</PageSlash>
                13
              </PagePart>
              <ZoomPart>
                <MdRemove size={46} />
                <MdZoomIn size={46} />
                <MdAdd size={46} />
              </ZoomPart>
            </PageBar>
          </Page>

          <RightPanel>
            <FileArea>
              <ViewBar>
                <ViewToggle>
                  <ViewHalf $on><MdCheck size={32} /><MdMenu size={36} /></ViewHalf>
                  <ViewHalf><MdOutlineGridView size={34} /></ViewHalf>
                </ViewToggle>
                <MdInfoOutline size={38} />
              </ViewBar>
              <SizeHeader>
                File size
                <SortLines><span /><span /><span /></SortLines>
              </SizeHeader>
              <SelectedRow>
                222 KB
                <RowDots><MdMoreVert size={34} /></RowDots>
              </SelectedRow>
            </FileArea>
            <Rail>
              <RailIcon>
                <svg width="38" height="36" viewBox="0 0 38 36">
                  <rect width="38" height="36" rx="2" fill="#2a3f60" />
                  <rect x="5" y="6" width="28" height="24" fill="#3a3d42" />
                  <rect x="33" y="6" width="5" height="24" fill="#5e5028" />
                  <rect y="30" width="33" height="6" fill="#2a5036" />
                  <text x="19" y="25" textAnchor="middle" fontSize="17" fontFamily="Roboto" fontWeight="500" fill="#2a3f60">31</text>
                </svg>
              </RailIcon>
              <RailIcon>
                <svg width="38" height="36" viewBox="0 0 38 36">
                  <rect width="38" height="36" rx="3" fill="#61481f" />
                  <circle cx="19" cy="16" r="8" fill="#7c6a3e" />
                  <rect x="15" y="24" width="8" height="4" fill="#7c6a3e" />
                </svg>
              </RailIcon>
              <RailIcon>
                <svg width="38" height="32" viewBox="0 0 38 32" fill="none">
                  <ellipse cx="18" cy="16" rx="15" ry="13" stroke="#28497f" strokeWidth="6" />
                  <path d="M10 15L17 22L35 4" stroke="#26406d" strokeWidth="6" />
                </svg>
              </RailIcon>
              <RailIcon>
                <svg width="28" height="32" viewBox="0 0 28 32">
                  <circle cx="14" cy="8" r="7" fill="#242f4c" />
                  <path d="M0 30C0 22 6 18 14 18S28 22 28 30Z" fill="#242f4c" />
                </svg>
              </RailIcon>
              <RailRule />
              <RailIcon>
                <svg width="38" height="38" viewBox="0 0 38 38" fill="none" stroke="#5a2a50" strokeWidth="2" strokeLinejoin="round">
                  <path d="M1 24C6 26 10 20 14 18L24 16L28 9L32 6L36 1L35 8L38 14L36 17L31 14L29 22L36 26L33 28L26 25L20 28L17 36L13 36L14 28L8 30L4 34L5 27Z" />
                </svg>
              </RailIcon>
              <RailIcon $after={284}><MdAdd size={46} color="#242424" /></RailIcon>
              <RailIcon $after={0}><MdOutlineChevronRight size={36} color="#272727" /></RailIcon>
            </Rail>
            <Scrollbar />
          </RightPanel>

          <CommentFab>
            <svg width="40" height="38" viewBox="0 0 40 38">
              <path d="M2 0H38a2 2 0 0 1 2 2V38L30 30H2a2 2 0 0 1-2-2V2a2 2 0 0 1 2-2Z" fill="#8b8b8b" />
              <path d="M20 7V23M10 15H30" stroke="#fff" strokeWidth="4" />
            </svg>
          </CommentFab>
        </Body>
      </Viewer>
      <Gutter />

      <Taskbar>
        <WeatherZone>
          <svg width="42" height="40" viewBox="0 0 42 40" fill="none">
            <path d="M1 20C3 8 12 3 21 3S39 8 41 20C37 17 33 17 30 20C27 17 24 17 21 20C18 17 15 17 12 20C9 17 5 17 1 20Z" fill="#7eb8f5" />
            <path d="M21 3V32C21 38 13 38 13 32" stroke="#777" strokeWidth="3" strokeLinecap="round" />
          </svg>
          <CountBadge $bg="#c42b1c" $left={62} $top={12}>4</CountBadge>
        </WeatherZone>
        {taskbarApps.map((a, i) => (
          <Slot key={i} $active={a.active}>
            {a.node}
            {a.badge && <CountBadge $bg="#0a78d0" $left={46} $top={12}>{a.badge}</CountBadge>}
            {(a.dot || a.active) && <RunDot $active={a.active} />}
          </Slot>
        ))}
        <Tray>
          <ChevronUp size={30} strokeWidth={2} color="#1a1a1a" />
          <Lang>ENG<br />US</Lang>
          <TrayIcons>
            <Wifi size={34} strokeWidth={2.2} color="#1a1a1a" />
            <VolumeX size={32} strokeWidth={1.7} color="#1a1a1a" />
            <svg width="34" height="38" viewBox="0 0 34 38" fill="none">
              <rect x="1.500" y="10" width="26" height="24" rx="4" stroke="#1a1a1a" strokeWidth="3" />
              <rect x="4" y="14" width="18" height="16" fill="#1a1a1a" />
              <rect x="29" y="16" width="4" height="12" rx="1" fill="#1a1a1a" />
              <path d="M10 0L5 14H11L8 24L16 10H10Z" fill="#1a1a1a" stroke="#ececec" />
            </svg>
          </TrayIcons>
          <Clock>9:55 AM<br />10/10/2025</Clock>
        </Tray>
      </Taskbar>
    </Screen>
  );
}
